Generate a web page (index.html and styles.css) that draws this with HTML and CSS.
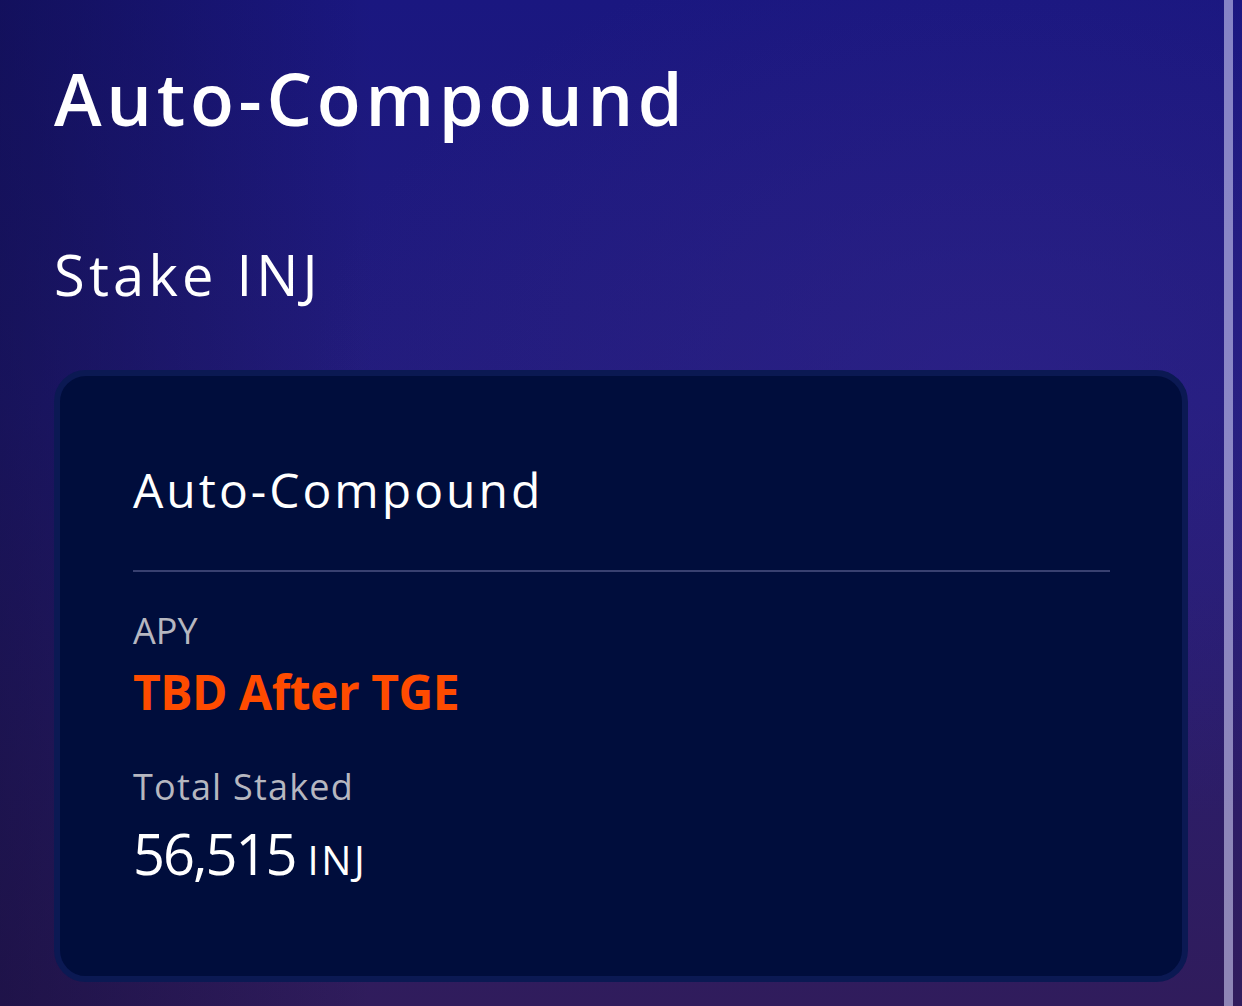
FILE: index.html
```html
<!DOCTYPE html>
<html lang="en">
<head>
<meta charset="utf-8">
<title>Auto-Compound</title>
<link rel="stylesheet" href="styles.css">
</head>
<body>
<div class="page">
  <main class="main">
    <h1 class="title">Auto-Compound</h1>
    <h2 class="subtitle">Stake INJ</h2>
    <section class="card">
      <h3 class="card-title">Auto-Compound</h3>
      <hr class="divider">
      <div class="stat">
        <div class="label">APY</div>
        <div class="value-accent">TBD After TGE</div>
      </div>
      <div class="stat stat-second">
        <div class="label">Total Staked</div>
        <div class="value"><span class="amount">56,515</span><span class="unit">INJ</span></div>
      </div>
    </section>
  </main>
  <div class="scrollbar"></div>
  <div class="gutter"></div>
</div>
</body>
</html>
```

FILE: styles.css
```css
html, body {
  margin: 0;
  padding: 0;
  height: 100%;
}

body {
  font-family: "Open Sans", "Noto Sans", sans-serif;
  color: #ffffff;
  background-color: #1c1870;
  background-image:
    radial-gradient(ellipse 55% 45% at 80% 38%, rgba(48, 36, 140, 0.55), rgba(48, 36, 140, 0) 100%),
    linear-gradient(90deg, rgba(10, 8, 50, 0.45) 0%, rgba(10, 8, 50, 0) 30%),
    linear-gradient(180deg, #1a1780 0%, #231c7c 40%, #2c1d68 75%, #301c5c 100%);
  overflow: hidden;
}

.page {
  display: flex;
  height: 1006px;
}

.main {
  flex: 1;
  padding: 62px 36px 0 54px;
}

.title {
  margin: 0;
  font-size: 72px;
  line-height: 1;
  font-weight: 600;
  letter-spacing: 4.7px;
}

.subtitle {
  margin: 112px 0 0;
  font-size: 56px;
  line-height: 1;
  font-weight: 400;
  letter-spacing: 4.2px;
}

.card {
  margin-top: 68px;
  width: 1134px;
  box-sizing: border-box;
  background: #000d3c;
  border: 6px solid #0b1953;
  border-radius: 32px;
  padding: 90px 72px 95px 73px;
}

.card-title {
  margin: 0;
  font-size: 48px;
  line-height: 1;
  font-weight: 400;
  letter-spacing: 3px;
}

.divider {
  margin: 56px 0 0;
  border: 0;
  height: 2px;
  background: #384070;
}

.stat {
  margin-top: 41px;
}

.stat-second {
  margin-top: 53px;
}

.label {
  font-size: 36px;
  line-height: 1;
  color: #b6b7c0;
}

.stat-second .label {
  letter-spacing: 1.2px;
}

.value-accent {
  margin-top: 19px;
  font-size: 48px;
  line-height: 1;
  font-weight: 700;
  letter-spacing: -0.5px;
  color: #ff4b00;
}

.value {
  margin-top: 20px;
  line-height: 1;
  display: flex;
  align-items: baseline;
  gap: 12px;
}

.amount {
  font-size: 56px;
  letter-spacing: -2px;
}

.unit {
  font-size: 40px;
  letter-spacing: 2.5px;
}

.scrollbar {
  width: 9px;
  background: rgba(220, 220, 255, 0.55);
}

.gutter {
  width: 9px;
}
```
